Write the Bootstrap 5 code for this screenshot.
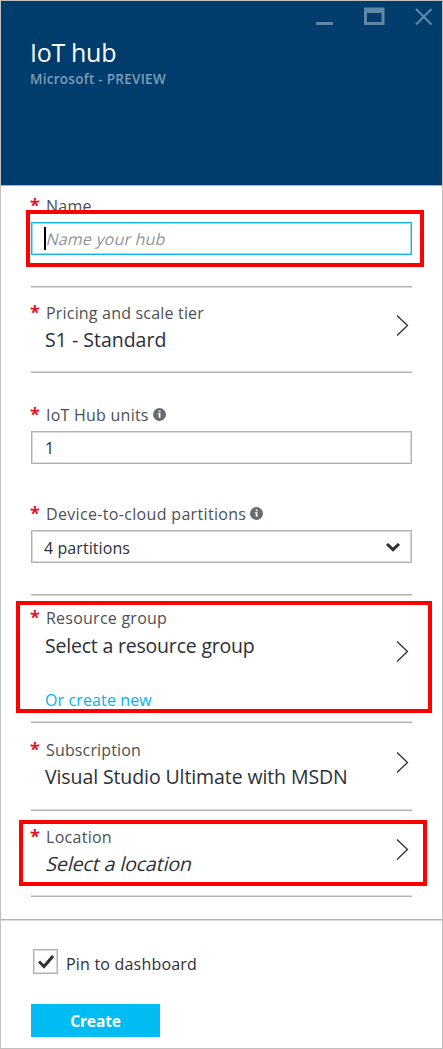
<!DOCTYPE html>
<html lang="en">
<head>
<meta charset="utf-8">
<meta name="viewport" content="width=device-width, initial-scale=1">
<title>IoT hub</title>
<link href="https://cdn.jsdelivr.net/npm/bootstrap@5.3.0/dist/css/bootstrap.min.css" rel="stylesheet">
<style>
body{font-family:"Open Sans","Noto Sans",sans-serif;color:#2b2f38;font-size:16px;line-height:20px}
.blade{height:1049px;border:1px solid #c0c0c0;background:#fff;overflow:hidden}
.blade-head{height:185px;margin-top:-1px;padding:35px 0 0 29px;background:#003c6c;border-top:1px solid #c0c0c0;box-shadow:0 1px 0 #b2b2b2;color:#fff}
.blade-title{font-size:25px;line-height:32px;margin:0;font-weight:400;letter-spacing:-.3px}
.blade-sub{font-size:13.5px;line-height:18px;font-weight:600;color:#7f9db5;letter-spacing:.28px;margin-top:2px}
.win{top:0;right:0}
.sect{margin:0 30px;position:relative}
.rule-dl{height:2px;border-top:1px solid #b2b2b2;border-bottom:1px solid #dadada}
.rule-ld{height:2px;border-top:1px solid #dadada;border-bottom:1px solid #b2b2b2}
.cap{color:#4d4f53;height:20px;white-space:nowrap;letter-spacing:.28px}
.star{width:16px;margin:-1px 0 0 -1px;flex:none;color:#e81123;font-weight:700;font-size:18px;line-height:20px;letter-spacing:0}
.val{font-size:19.5px;line-height:24px;height:24px;margin:5px 0 0 14px;white-space:nowrap;letter-spacing:-.1px}
.fld{height:33px;border:1px solid #b2b2b2;box-shadow:inset 0 0 0 1px #dadada;border-radius:0;background:#fff;white-space:nowrap}
.fld-on{border-color:#12b5ea;box-shadow:inset 0 0 0 1px #93dff7}
.caret{width:2px;height:23px;background:#000;flex:none;margin-left:12px}
.slant{display:inline-block;transform:skewX(-14deg)}
.hint{color:#909498;margin-left:1px;letter-spacing:.2px}
.chev{flex:none;width:13px;height:21px;margin-right:3px}
.mark-box{position:absolute;border:4px solid #f00;pointer-events:none}
.s-name{height:100px;padding-top:10px}.s-name .fld{margin-top:6px}
.s-name .mark-box{left:-5px;right:-12px;top:24px;height:57px}
.s-tier{height:83px;padding-top:15px}
.s-units{height:91px;padding-top:32px}.s-units .fld{margin-top:6px}
.s-part{height:130px;padding-top:40px}.s-part .fld{margin-top:6px}
.s-group{height:125px;padding-top:12px}
.s-group .mark-box{left:-15px;right:-20px;top:5px;height:112px}
.s-sub{height:86px;padding-top:17px}
.s-loc{height:84px;padding-top:16px}
.s-loc .mark-box{left:-12px;right:-15px;top:9px;height:66px}
.link-new{color:#00b3ee;margin:28px 0 0 14px;letter-spacing:.12px}
.tick{width:25px;height:25px;border:1px solid #b2b2b2;box-shadow:inset 0 0 0 1px #dadada}
.btn-create{width:129px;height:33px;background:#00bcf2;color:#fff;border:0;border-radius:0;font-weight:700;font-size:15.5px;line-height:20px;padding:0;letter-spacing:-.1px}
</style>
</head>
<body>
<main class="blade position-relative">
  <header class="blade-head position-relative">
    <svg class="win position-absolute" width="141" height="40" viewBox="301 1 141 40" fill="none" aria-label="Window controls">
      <path d="M316 23.500h17" stroke="#5f87a6" stroke-width="3"/>
      <path fill="#5f87a6" fill-rule="evenodd" d="M364 7.500h20.500V25H364zM367 13v9h14.500v-9z"/>
      <path d="M416 9l15.500 15.500M431.500 9L416 24.500" stroke="#5f87a6" stroke-width="2.200"/>
    </svg>
    <h1 class="blade-title">IoT hub</h1>
    <div class="blade-sub">Microsoft - PREVIEW</div>
  </header>
  <div style="height:1px"></div>

  <section class="sect s-name">
    <div class="cap d-flex"><span class="star">*</span>Name</div>
    <div class="fld fld-on d-flex align-items-center"><span class="caret"></span><span class="hint slant">Name your hub</span></div>
    <div class="mark-box"></div>
  </section>
  <div class="sect rule-dl"></div>

  <section class="sect s-tier d-flex justify-content-between">
    <div><div class="cap d-flex" style="letter-spacing:.19px"><span class="star">*</span>Pricing and scale tier</div>
    <div class="val" style="letter-spacing:0">S1 - Standard</div></div>
    <svg class="chev" style="margin-top:12px" viewBox="0 0 13 21" fill="none" stroke="#2b2f38" stroke-width="1.300"><path d="M1 .5l10.500 10L1 20.500"/></svg>
  </section>
  <div class="sect rule-ld"></div>

  <section class="sect s-units">
    <div class="cap d-flex" style="letter-spacing:.24px"><span class="star">*</span>IoT Hub units
      <svg class="ms-1" style="margin-top:3px" width="13" height="13" viewBox="0 0 13 13"><circle cx="6.500" cy="6.500" r="6.500" fill="#686b70"/><path d="M5.700 2.500h1.800v1.800H5.700zM4.800 5.300h2.700v4.500H5.700V6.200h-.9z" fill="#fff"/></svg></div>
    <div class="fld d-flex align-items-center" style="padding-left:13px">1</div>
  </section>

  <section class="sect s-part">
    <div class="cap d-flex" style="letter-spacing:.33px"><span class="star">*</span>Device-to-cloud partitions
      <svg class="ms-1" style="margin-top:3px" width="13" height="13" viewBox="0 0 13 13"><circle cx="6.500" cy="6.500" r="6.500" fill="#686b70"/><path d="M5.700 2.500h1.800v1.800H5.700zM4.800 5.300h2.700v4.500H5.700V6.200h-.9z" fill="#fff"/></svg></div>
    <div class="fld d-flex align-items-center justify-content-between" style="padding:3px 11px 0 12px"><span style="letter-spacing:.08px">4 partitions</span>
      <svg style="margin-top:-2px" width="14" height="9" viewBox="0 0 14 9" fill="none" stroke="#2b2f38" stroke-width="3"><path d="M1 1l6 5.700L13 1"/></svg></div>
  </section>
  <div class="sect rule-dl"></div>

  <section class="sect s-group">
    <div class="d-flex justify-content-between">
      <div><div class="cap d-flex" style="letter-spacing:.24px"><span class="star">*</span>Resource group</div>
      <div class="val" style="margin-top:6px;letter-spacing:-.2px">Select a resource group</div></div>
      <svg class="chev" style="margin-top:33px" viewBox="0 0 13 21" fill="none" stroke="#2b2f38" stroke-width="1.300"><path d="M1 .5l10.500 10L1 20.500"/></svg>
    </div>
    <div class="link-new">Or create new</div>
    <div class="mark-box"></div>
  </section>
  <div class="sect rule-ld"></div>

  <section class="sect s-sub d-flex justify-content-between">
    <div><div class="cap d-flex" style="letter-spacing:.15px"><span class="star">*</span>Subscription</div>
    <div class="val">Visual Studio Ultimate with MSDN</div></div>
    <svg class="chev" style="margin-top:12px" viewBox="0 0 13 21" fill="none" stroke="#2b2f38" stroke-width="1.300"><path d="M1 .5l10.500 10L1 20.500"/></svg>
  </section>
  <div class="sect rule-ld"></div>

  <section class="sect s-loc d-flex justify-content-between">
    <div><div class="cap d-flex"><span class="star">*</span>Location</div>
    <div class="val" style="letter-spacing:-.1px;margin-left:16px"><span class="slant">Select a location</span></div></div>
    <svg class="chev" style="margin-top:12px" viewBox="0 0 13 21" fill="none" stroke="#2b2f38" stroke-width="1.300"><path d="M1 .5l10.500 10L1 20.500"/></svg>
    <div class="mark-box"></div>
  </section>
  <div class="sect rule-ld"></div>

  <footer style="padding-top:22px">
    <div class="rule-dl"></div>
    <div class="d-flex" style="padding:28px 0 0 32px">
      <span class="tick d-flex align-items-center justify-content-center"><svg width="16" height="14" viewBox="0 0 16 14" fill="none" stroke="#2b2f38" stroke-width="3"><path d="M1 6.500l5 5L15 1"/></svg></span>
      <span style="margin:5px 0 0 8px;letter-spacing:.2px">Pin to dashboard</span>
    </div>
    <button class="btn-create btn d-block" style="margin:30px 0 0 30px" type="button">Create</button>
  </footer>
</main>
<script src="https://cdn.jsdelivr.net/npm/bootstrap@5.3.0/dist/js/bootstrap.bundle.min.js"></script>
</body>
</html>
